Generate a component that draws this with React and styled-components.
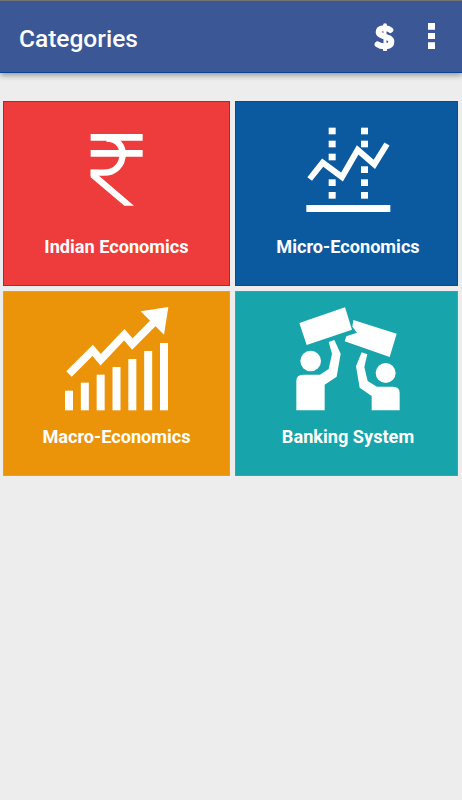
import React from 'react';
import styled, { createGlobalStyle } from 'styled-components';

const GlobalStyle = createGlobalStyle`
  body {
    margin: 0;
    background: #ededed;
    font-family: Roboto, sans-serif;
  }
`;

// Styled components
const Screen = styled.div`
  min-height: 800px;
  background: #ededed;
`;

const AppBar = styled.header`
  box-sizing: border-box;
  display: flex;
  align-items: center;
  height: 73px;
  padding: 0 27px 0 19px;
  background: #3b5795;
  border-top: 1px solid #747474;
  border-bottom: 1px solid #044595;
  box-shadow: 0 2px 6px rgba(0, 0, 0, 0.4);
`;

const Title = styled.h1`
  flex: 1;
  margin: 4px 0 0;
  color: #fff;
  font-size: 24.5px;
  font-weight: 500;
  line-height: 30px;
`;

const IconButton = styled.button`
  display: flex;
  padding: 0;
  margin-left: ${({ $gap }) => $gap || 0}px;
  border: none;
  background: none;
  color: #fff;
  cursor: pointer;
`;

const Grid = styled.main`
  display: grid;
  grid-template-columns: 227px 223px;
  grid-auto-rows: 185px;
  gap: 5px;
  padding: 28px 4px 0 3px;
`;

const Tile = styled.section`
  box-sizing: border-box;
  display: flex;
  flex-direction: column;
  align-items: center;
  padding-top: 9px;
  background: ${({ $color }) => $color};
  border: 1px solid ${({ $edge }) => $edge};
  color: #fff;
`;

const TileIcon = styled.svg`
  display: block;
  width: 121px;
  height: 115px;
`;

const Label = styled.h2`
  margin: 10px 0 0 ${({ $shift }) => $shift || 0}px;
  font-size: 18.15px;
  font-weight: 700;
  line-height: 22px;
  white-space: nowrap;
`;

function DollarIcon() {
  return (
    <svg width="22" height="29" viewBox="72 66 66 87" fill="none" stroke="currentColor" strokeLinecap="round" strokeLinejoin="round">
      <path d="M105 76V86M105 138V149" strokeWidth="12" />
      <path d="M121 90C113 82 86 82 86 96C86 111 124 108 124 125C124 142 95 142 83 133" strokeWidth="18" />
      <path d="M105 82V144" strokeWidth="9" />
    </svg>
  );
}

function MoreIcon() {
  return (
    <svg width="8" height="27" viewBox="0 0 8 27" fill="currentColor">
      <path d="M1 0h7v6.7h-7zM1 10h7v6h-7zM1 19.3h7v6.7h-7z" />
    </svg>
  );
}

function RupeeIcon() {
  return (
    <TileIcon viewBox="-57 -27 363 345" fill="none" stroke="currentColor">
      <path d="M47 52H203M47 100H203" strokeWidth="20" />
      <path d="M94 56C130 56 143 80 143 101C143 135 120 158 86 158H47" strokeWidth="19" />
      <path d="M47 149H70V166L177 257H148L47 172Z" fill="currentColor" stroke="none" />
    </TileIcon>
  );
}

function ChartLineIcon() {
  const left = [38, 77, 116, 193, 231];
  const right = [38, 77, 154, 193, 231];

  return (
    <TileIcon viewBox="-27 -12 363 345" fill="currentColor">
      {left.map(y => <rect key={y} x="101" y={y} width="21" height="20" />)}
      {right.map(y => <rect key={y} x="198" y={y} width="21" height="20" />)}
      <path d="M44 192L83 143L141 186L188 105L238 148L276 87" fill="none" stroke="currentColor" strokeWidth="18" />
      <rect x="34" y="270" width="252" height="21" />
    </TileIcon>
  );
}

function GrowthIcon() {
  const tops = [272, 248, 224, 201, 177, 153, 129];

  return (
    <TileIcon viewBox="3 3 363 345" fill="currentColor">
      {tops.map((y, i) => (
        <rect key={y} x={30 + i * 47.5} y={y} width="24" height={331 - y} />
      ))}
      <path d="M42 222L113 151L137 179L208 104L232 132L297 67" fill="none" stroke="currentColor" strokeWidth="23" />
      <path d="M257 34L340 21L327 104Z" />
    </TileIcon>
  );
}

function ProtestIcon() {
  return (
    <TileIcon viewBox="3 3 363 345" fill="currentColor">
      <path d="M43 69L180 22L201 89L65 135Z" />
      <path d="M205 60L335 101L314 171L179 124L184 109L216 98L202 80Z" />
      <circle cx="77" cy="183" r="31" />
      <circle cx="302" cy="219" r="30" />
      <path d="M34 331V243Q34 224 54 224H105L131 207L141 161L131 126L148 120L167 161L155 230L119 254V331Z" />
      <path d="M344 331V279Q344 260 324 260H276L248 243L238 201L247 163L230 157L213 199L224 263L260 288V331Z" />
    </TileIcon>
  );
}

const categories = [
  { name: 'Indian Economics', color: '#ee3b3b', edge: '#e01414', icon: RupeeIcon },
  { name: 'Micro-Economics', color: '#0b5a9f', edge: '#064a98', icon: ChartLineIcon, shift: 3 },
  { name: 'Macro-Economics', color: '#eb940a', edge: '#ec9c20', icon: GrowthIcon },
  { name: 'Banking System', color: '#17a4aa', edge: '#2caab0', icon: ProtestIcon, shift: 3 },
];

export default function App() {
  return (
    <Screen>
      <GlobalStyle />
      <AppBar>
        <Title>Categories</Title>
        <IconButton aria-label="Purchase">
          <DollarIcon />
        </IconButton>
        <IconButton aria-label="More options" $gap={31}>
          <MoreIcon />
        </IconButton>
      </AppBar>
      <Grid>
        {categories.map(({ name, color, edge, icon: Icon, shift }) => (
          <Tile key={name} $color={color} $edge={edge}>
            <Icon />
            <Label $shift={shift}>{name}</Label>
          </Tile>
        ))}
      </Grid>
    </Screen>
  );
}
